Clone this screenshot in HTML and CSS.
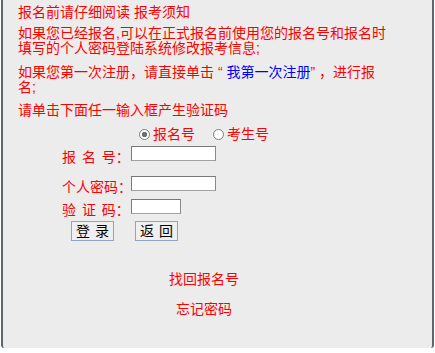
FILE: index.html
```html
<!DOCTYPE html>
<html lang="zh-CN">
<head>
<meta charset="utf-8">
<title>报名登录</title>
<link rel="stylesheet" href="styles.css">
</head>
<body>
<div class="panel">
  <div class="notice">
    <p class="title">报名前请仔细阅读 报考须知</p>
    <p class="p2">如果您已经报名,可以在正式报名前使用您的报名号和报名时填写的个人密码登陆系统修改报考信息;</p>
    <p class="p3">如果您第一次注册，请直接单击 “ <a class="blue" href="#">我第一次注册</a>” ，进行报名;</p>
    <p class="p4">请单击下面任一输入框产生验证码</p>
  </div>
  <form class="login">
    <div class="radios">
      <label class="opt"><input type="radio" name="kind" checked><span>报名号</span></label>
      <label class="opt opt2"><input type="radio" name="kind"><span>考生号</span></label>
    </div>
    <div class="row row1">
      <span class="lab">报 名 号<span class="colon">：</span></span>
      <input class="field" type="text">
    </div>
    <div class="row row2">
      <span class="lab">个人密码<span class="colon">：</span></span>
      <input class="field" type="password">
    </div>
    <div class="row row3">
      <span class="lab">验 证 码<span class="colon">：</span></span>
      <input class="field short" type="text">
    </div>
    <div class="buttons">
      <button type="button" class="btn">登 录</button>
      <button type="button" class="btn">返 回</button>
    </div>
  </form>
  <div class="links">
    <a href="#" class="link first">找回报名号</a>
    <a href="#" class="link second">忘记密码</a>
  </div>
</div>
</body>
</html>
```

FILE: styles.css
```css
html, body {
  margin: 0;
  padding: 0;
  background: #ffffff;
}
body {
  font-family: "Liberation Sans", "Noto Sans CJK SC", sans-serif;
  font-size: 14px;
  color: #ff0000;
  text-spacing-trim: space-all;
}
.panel {
  box-sizing: border-box;
  margin-left: 1px;
  width: 433px;
  height: 348px;
  background: #ececec;
  border-left: 2px solid #5c6673;
  border-right: 2px solid #5c6673;
  border-bottom-left-radius: 3px;
  border-bottom-right-radius: 3px;
  overflow: hidden;
}
.notice {
  padding-left: 15px;
  width: 372px;
}
.notice p {
  margin: 0;
  line-height: 15px;
}
.notice .title { margin-top: 4.5px; }
.notice .p2 { margin-top: 6px; }
.notice .p3 { margin-top: 9px; }
.notice .p4 { margin-top: 8px; }
.blue {
  color: #0000ff;
  text-decoration: none;
}
.login {
  margin: 0;
}
.radios {
  display: flex;
  align-items: center;
  margin-top: 9px;
  margin-left: 136px;
  height: 15px;
  line-height: 15px;
}
.opt {
  display: flex;
  align-items: center;
}
.opt2 {
  margin-left: 18px;
}
.opt span {
  margin-left: 3px;
}
.opt input {
  appearance: none;
  -webkit-appearance: none;
  margin: 0;
  width: 11px;
  height: 11px;
  border: 1px solid #7d7d7d;
  border-radius: 50%;
  background: #ffffff;
  box-sizing: border-box;
}
.opt input:checked {
  background: radial-gradient(circle, #6e6e6e 0 2.5px, #ffffff 3px);
}
.row {
  display: grid;
  grid-template-columns: 69px auto;
  align-items: start;
  height: 18px;
  margin-left: 59px;
}
.row1 { margin-top: 4.5px; }
.row2 { margin-top: 12px; }
.row3 { margin-top: 5px; }
.lab {
  margin-top: 3px;
  line-height: 15px;
  text-align: left;
  word-spacing: 2px;
  white-space: nowrap;
}
.colon {
  font-family: "Noto Sans CJK JP", sans-serif;
}
.field {
  box-sizing: border-box;
  width: 85px;
  height: 15px;
  margin: 0;
  padding: 0 2px;
  border: 1px solid #8a8a8a;
  border-top-color: #787878;
  border-left-color: #7c7c7c;
  border-bottom-color: #a2a2a2;
  background: #ffffff;
  font-size: 12px;
}
.field.short {
  width: 50px;
}
.buttons {
  display: flex;
  gap: 21px;
  margin-top: 4px;
  margin-left: 68px;
}
.btn {
  box-sizing: border-box;
  width: 43px;
  height: 20px;
  margin: 0;
  padding: 0;
  border: 1px solid #8ea6c3;
  background: #efefef;
  color: #000000;
  font-family: "Liberation Sans", "Noto Sans CJK SC", sans-serif;
  font-size: 14px;
  line-height: 18px;
  word-spacing: 1px;
}
.links {
  width: 402px;
  display: flex;
  flex-direction: column;
  align-items: center;
  margin-top: 30.5px;
}
.link {
  color: #ff0000;
  text-decoration: none;
  line-height: 15px;
}
.link.second {
  margin-top: 15px;
}
```
